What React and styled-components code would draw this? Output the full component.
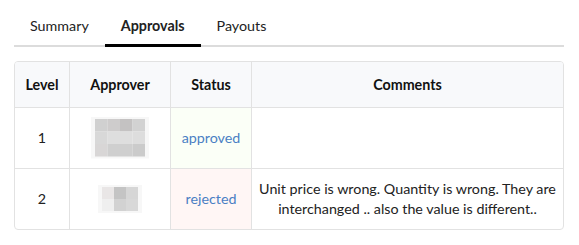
import styled, { createGlobalStyle } from 'styled-components'

const Global = createGlobalStyle`
    body {
        margin: 0;
        background: #fff;
        font-family: Lato, "Open Sans", sans-serif;
        color: #222;
    }
`;

const approvals = [
    { level: 1, status: 'approved', comment: '', blur: 'big' },
    { level: 2, status: 'rejected', comment: 'Unit price is wrong. Quantity is wrong. They are interchanged .. also the value is different..', blur: 'small' },
];

const bigBlocks = [
    ['#d0d0d0', '#cecccc', '#c4c2c2', '#d2d2d2'],
    ['#d8d8d8', '#dedede', '#dedede', '#dddddd'],
    ['#d8d6d6', '#cfcfcf', '#cfcfcf', '#cbcbcb'],
];
const smallBlocks = [
    ['#e9e6e6', '#c4c4c4', '#d6d6d6'],
    ['#efefef', '#d2d2d2', '#d8d8d8'],
];

const Blurred = ({ size }) => {
    const blocks = size === 'big' ? bigBlocks : smallBlocks;
    const cell = size === 'big' ? 12.5 : 12;
    const w = blocks[0].length * cell;
    const h = blocks.length * cell;
    return (
        <svg width={w + 8} height={h + 4} viewBox={`-4 -2 ${w + 8} ${h + 4}`}>
            <rect x="-4" y="-2" width={w + 8} height={h + 4} fill="#f7f7f7" />
            {blocks.map((row, r) =>
                row.map((c, i) => (
                    <rect key={`${r}-${i}`} x={i * cell} y={r * cell} width={cell} height={cell} fill={c} />
                ))
            )}
        </svg>
    );
};

const App = () => (
    <Page>
        <Global />
        <Tabs>
            <Tab>Summary</Tab>
            <Tab active>Approvals</Tab>
            <Tab>Payouts</Tab>
        </Tabs>
        <TableWrap>
            <Table>
                <thead>
                    <tr>
                        <Th w={54}>Level</Th>
                        <Th w={100}>Approver</Th>
                        <Th w={80}>Status</Th>
                        <Th>Comments</Th>
                    </tr>
                </thead>
                <tbody>
                    {approvals.map((a) => (
                        <tr key={a.level}>
                            <Td>{a.level}</Td>
                            <Td><Blurred size={a.blur} /></Td>
                            <StatusTd status={a.status}>{a.status}</StatusTd>
                            <Td>{a.comment}</Td>
                        </tr>
                    ))}
                </tbody>
            </Table>
        </TableWrap>
    </Page>
);

const Page = styled.div`
    padding: 0 15px 0 14px;
`;

const Tabs = styled.div`
    display: flex;
    border-bottom: 2px solid #dcdcdc;
`;

const Tab = styled.div`
    padding: 17px 16px 9px;
    font-size: 14.3px;
    line-height: 18px;
    color: #222;
    font-weight: ${(p) => (p.active ? 700 : 400)};
    margin-bottom: -2px;
    border-bottom: 3px solid ${(p) => (p.active ? '#000' : 'transparent')};
`;

const TableWrap = styled.div`
    margin-top: 14px;
    border: 1px solid #e2e2e2;
    border-radius: 4px;
    overflow: hidden;
`;

const Table = styled.table`
    width: 100%;
    border-collapse: collapse;
    font-size: 14.3px;
    table-layout: fixed;
`;

const Th = styled.th`
    ${(p) => (p.w ? `width: ${p.w}px;` : '')}
    height: 45px;
    background: #f8f9fb;
    font-weight: 700;
    color: #111;
    text-align: center;
    border-bottom: 1px solid #e2e2e2;
    border-left: 1px solid #e2e2e2;
    padding: 0;
    &:first-child { border-left: none; }
`;

const Td = styled.td`
    height: 60px;
    text-align: center;
    vertical-align: middle;
    line-height: 20px;
    padding: 0 4px;
    border-left: 1px solid #e2e2e2;
    border-top: 1px solid #e2e2e2;
    color: #222;
    &:first-child { border-left: none; }
    svg { display: block; margin: 0 auto; }
`;

const StatusTd = styled(Td)`
    padding: 0;
    color: #4a7fc4;
    background: ${(p) => (p.status === 'approved' ? '#fbfff7' : '#fff6f5')};
`;

export default App
